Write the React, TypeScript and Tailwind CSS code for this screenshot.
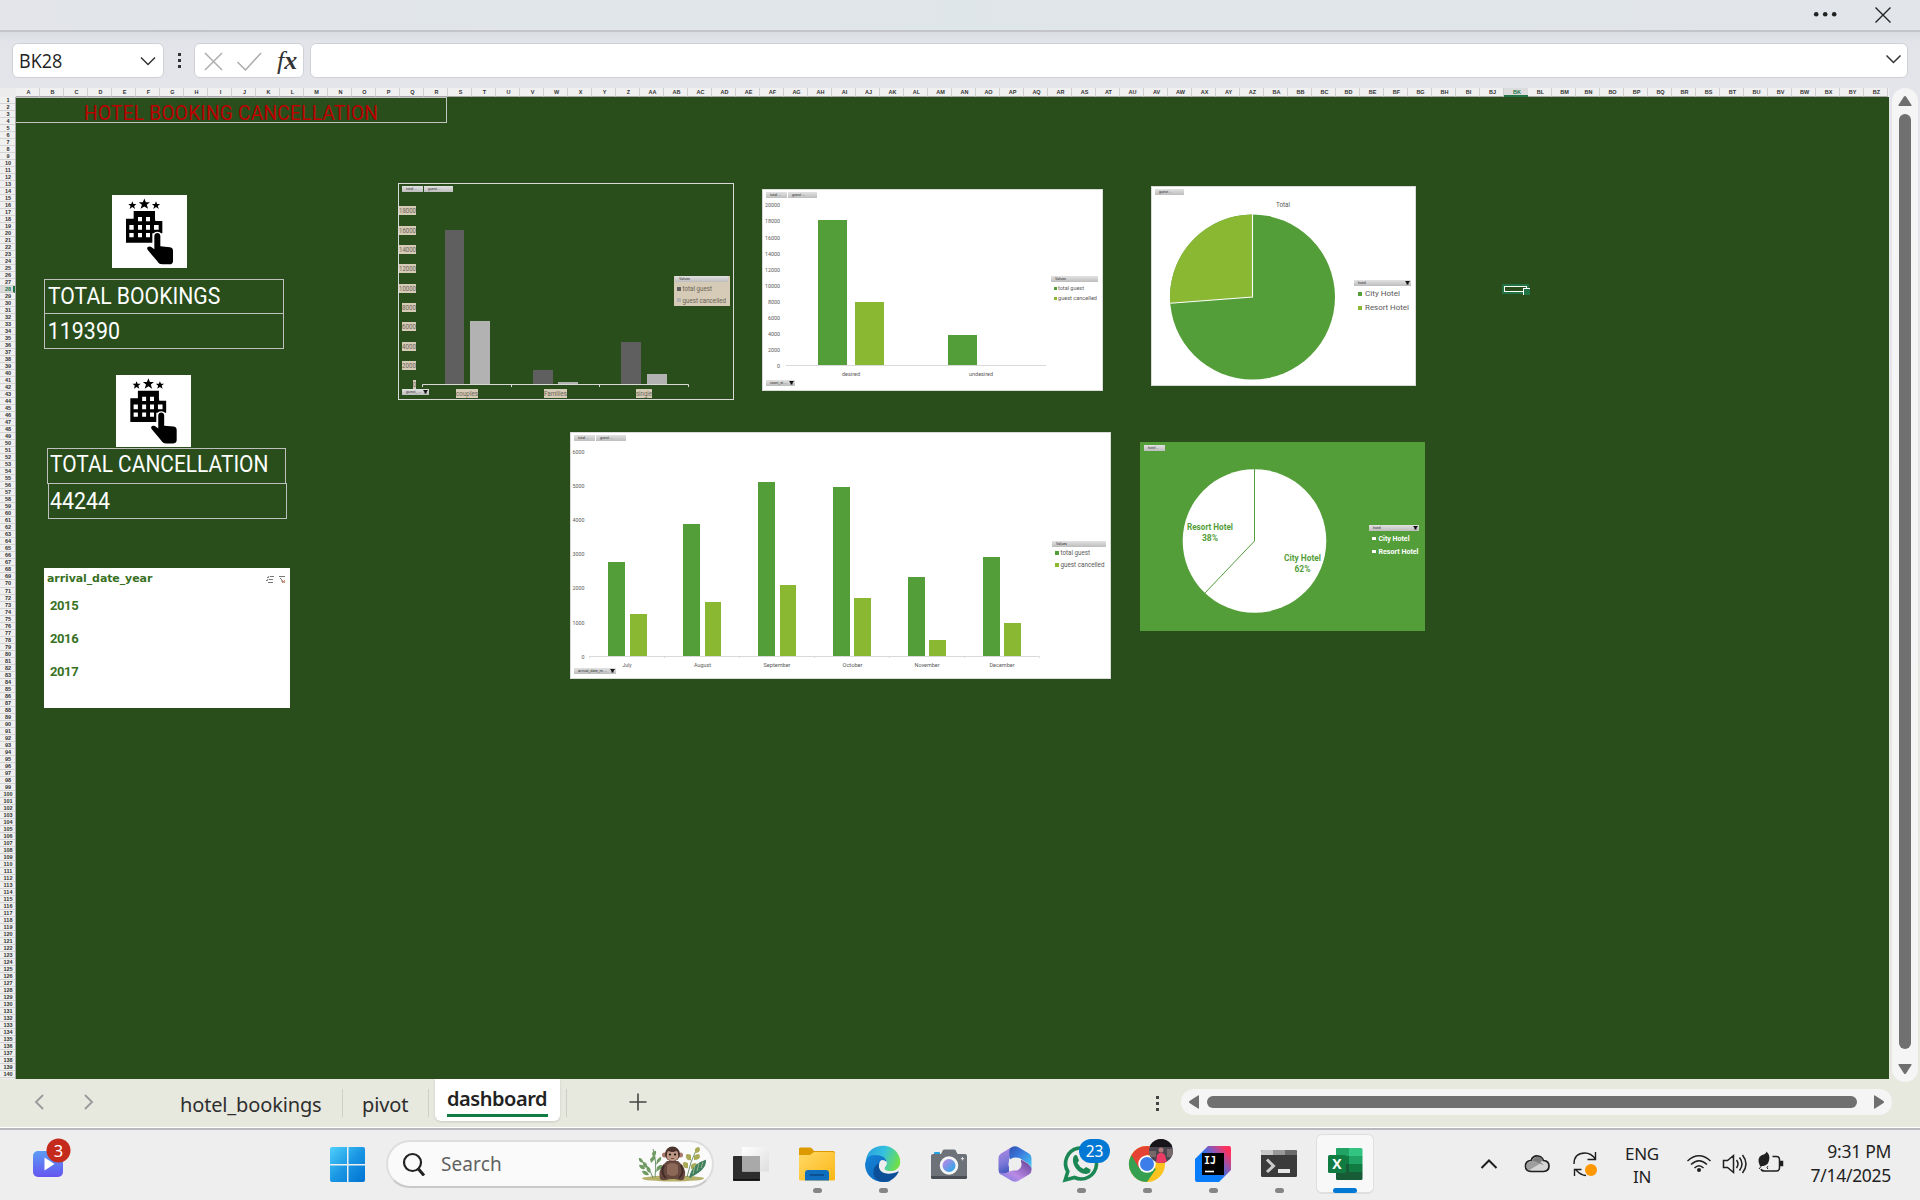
import React from "react";

const GREEN = "#549e39";
const LIME = "#8ab833";

function colName(i: number): string {
  return i < 26
    ? String.fromCharCode(65 + i)
    : String.fromCharCode(64 + Math.floor(i / 26)) + String.fromCharCode(65 + (i % 26));
}
const COLS = Array.from({ length: 78 }, (_, i) => colName(i));
const ROWS = Array.from({ length: 140 }, (_, i) => i + 1);

type LabelProps = {
  x: number;
  y: number;
  w: number;
  s?: number;
  c?: string;
  a?: "start" | "middle" | "end";
  b?: boolean;
  children: string;
};
function Label({ x, y, w, s = 6, c = "#595959", a = "start", b, children }: LabelProps) {
  return (
    <text
      x={x}
      y={y}
      textLength={w}
      lengthAdjust="spacingAndGlyphs"
      fontSize={s}
      fill={c}
      textAnchor={a}
      fontWeight={b ? 700 : 400}
      fontFamily="Roboto, 'Liberation Sans', sans-serif"
    >
      {children}
    </text>
  );
}

function FieldButton({ x, y, w, tw, arrow, children }: { x: number; y: number; w: number; tw: number; arrow?: boolean; children: string }) {
  return (
    <g>
      <rect x={x} y={y} width={w} height={6} fill="url(#btn)" />
      <Label x={x + 4} y={y + 4.3} w={tw} s={4.4} c="#333">{children}</Label>
      {arrow && <path d={`M${x + w - 6} ${y + 1}h5l-1.5 2v1.5h-2v-1.5z`} fill="#111" />}
    </g>
  );
}

function Chart({ x, y, w, h, children }: { x: number; y: number; w: number; h: number; children: React.ReactNode }) {
  return (
    <svg className="absolute" style={{ left: x - 16, top: y - 97 }} width={w} height={h} viewBox={`${x} ${y} ${w} ${h}`}>
      <defs>
        <linearGradient id="btn" x1="0" y1="0" x2="0" y2="1">
          <stop offset="0" stopColor="#e2e2e2" />
          <stop offset="1" stopColor="#bdbdbd" />
        </linearGradient>
      </defs>
      {children}
    </svg>
  );
}

function Bars({ data, bottom }: { data: [number, number, number, string][]; bottom: number }) {
  return (
    <>
      {data.map(([x, w, top, c]) => (
        <rect key={x} x={x} y={top} width={w} height={bottom - top} fill={c} />
      ))}
    </>
  );
}

function GuestTypeChart() {
  const ticks: [number, string][] = [
    [206, "18000"], [226, "16000"], [245, "14000"], [264, "12000"], [284, "10000"],
    [303, "8000"], [322, "6000"], [342, "4000"], [361, "2000"], [380, "0"],
  ];
  const cats: [number, number, string][] = [[456, 22, "couples"], [544, 23, "Families"], [636, 16, "single"]];
  return (
    <Chart x={398} y={183} w={336} h={217}>
      <rect x={398.5} y={183.5} width={335} height={216} fill="none" stroke="#d9d9d9" />
      <FieldButton x={402} y={186} w={21} tw={11}>total ...</FieldButton>
      <FieldButton x={424} y={186} w={29} tw={13}>guest ...</FieldButton>
      {ticks.map(([y, t]) => {
        const w = t.length === 5 ? 17 : t.length === 4 ? 14 : 3;
        return (
          <g key={t}>
            <rect x={416 - w} y={y} width={w} height={9} fill="#d5cbb6" />
            <Label x={416} y={y + 6.8} w={w} s={6.6} c="#6b6457" a="end">{t}</Label>
          </g>
        );
      })}
      <Bars
        bottom={384}
        data={[
          [445, 19, 230, "#5f5f5f"], [470, 20, 321, "#b2b2b2"], [533, 20, 370, "#5f5f5f"],
          [558, 20, 382, "#b2b2b2"], [621, 20, 342, "#5f5f5f"], [647, 20, 374, "#b2b2b2"],
        ]}
      />
      <path d="M422.5 387v-2.5h266v2.5M511.5 384.500v2.500M599.500 384.500v2.500" fill="none" stroke="#d9d9d9" />
      <FieldButton x={402} y={389} w={27} tw={15} arrow>guest_ ...</FieldButton>
      {cats.map(([x, w, t]) => (
        <g key={t}>
          <rect x={x} y={389} width={w} height={9} fill="#d5cbb6" />
          <Label x={x} y={395.8} w={w} s={6.8} c="#6b6457">{t}</Label>
        </g>
      ))}
      <rect x={674} y={276} width={56} height={30} fill="#d5cbb6" />
      <FieldButton x={675} y={276} w={53} tw={11}>Values</FieldButton>
      <rect x={677} y={287} width={4} height={4} fill="#5f5f5f" />
      <rect x={677} y={298} width={4} height={4} fill="#b2b2b2" />
      <Label x={682.500} y={291} w={29.500} s={7} c="#6b6457">total guest</Label>
      <Label x={682.500} y={303} w={43.500} s={7} c="#6b6457">guest cancelled</Label>
    </Chart>
  );
}

function RoomStatusChart() {
  const ys = [205, 221, 238, 254, 270, 286, 302, 318, 334, 350, 366];
  return (
    <Chart x={762} y={189} w={341} h={202}>
      <rect x={762.5} y={189.5} width={340} height={201} fill="#fff" stroke="#d9d9d9" />
      <FieldButton x={766} y={192} w={21} tw={11}>total ...</FieldButton>
      <FieldButton x={788} y={192} w={29} tw={13}>guest ...</FieldButton>
      {ys.map((y, i) => {
        const t = String(20000 - i * 2000);
        return <Label key={t} x={780} y={y + 2} w={t.length * 3} s={5.6} a="end">{t}</Label>;
      })}
      <Bars bottom={365} data={[[818, 29, 220, GREEN], [855, 29, 302, LIME], [948, 29, 335, GREEN]]} />
      <path d="M786 365.500h260" stroke="#d9d9d9" />
      <Label x={851} y={376} w={18} s={5.6} a="middle">desired</Label>
      <Label x={981} y={376} w={24} s={5.6} a="middle">undesired</Label>
      <FieldButton x={766} y={380} w={29} tw={17} arrow>room_st ...</FieldButton>
      <FieldButton x={1051} y={276} w={47} tw={11}>Values</FieldButton>
      <rect x={1054} y={287} width={3} height={3} fill={GREEN} />
      <rect x={1054} y={297} width={3} height={3} fill={LIME} />
      <Label x={1058} y={290.300} w={26} s={6}>total guest</Label>
      <Label x={1058} y={300.300} w={39} s={6}>guest cancelled</Label>
    </Chart>
  );
}

function HotelShareChart() {
  return (
    <Chart x={1151} y={186} w={265} h={200}>
      <rect x={1151.5} y={186.5} width={264} height={199} fill="#fff" stroke="#d9d9d9" />
      <FieldButton x={1155} y={189} w={29} tw={13}>guest ...</FieldButton>
      <Label x={1283} y={207} w={14} s={6.600} a="middle">Total</Label>
      <circle cx={1252.500} cy={297} r={82.500} fill={GREEN} />
      <path d="M1252.500 297V214.500A82.500 82.500 0 0 0 1170.200 303.200Z" fill={LIME} />
      <path d="M1252.500 214V297L1170.200 303.300" fill="none" stroke="#fff" strokeWidth={1.100} />
      <FieldButton x={1354} y={280} w={57} tw={8} arrow>hotel</FieldButton>
      <rect x={1358} y={292} width={4} height={4} fill={GREEN} />
      <rect x={1358} y={306} width={4} height={4} fill={LIME} />
      <Label x={1365} y={296.300} w={35} s={8}>City Hotel</Label>
      <Label x={1365} y={310.300} w={44} s={8}>Resort Hotel</Label>
    </Chart>
  );
}

function MonthlyChart() {
  const ys = [452, 486, 520, 554, 588, 623, 657];
  const months: [number, number, string][] = [
    [627, 9, "July"], [702.5, 17, "August"], [777, 27, "September"],
    [852.5, 20, "October"], [927, 25, "November"], [1002, 25, "December"],
  ];
  return (
    <Chart x={570} y={432} w={541} h={247}>
      <rect x={570.5} y={432.5} width={540} height={246} fill="#fff" stroke="#d9d9d9" />
      <FieldButton x={574} y={435} w={21} tw={11}>total ...</FieldButton>
      <FieldButton x={596} y={435} w={30} tw={13}>guest ...</FieldButton>
      {ys.map((y, i) => {
        const t = String(6000 - i * 1000);
        return <Label key={t} x={584.500} y={y + 2} w={t.length * 3} s={5.800} a="end">{t}</Label>;
      })}
      <Bars
        bottom={656}
        data={[
          [608, 17, 562, GREEN], [630, 17, 614, LIME], [683, 17, 524, GREEN], [705, 16, 602, LIME],
          [758, 17, 482, GREEN], [780, 16, 585, LIME], [833, 17, 487, GREEN], [854, 17, 598, LIME],
          [908, 17, 577, GREEN], [929, 17, 640, LIME], [983, 17, 557, GREEN], [1004, 17, 623, LIME],
        ]}
      />
      <path d="M589.500 658v-1.500h450v1.500M664.500 656v2M739.500 656v2M814.500 656v2M889.500 656v2M964.500 656v2" fill="none" stroke="#d9d9d9" />
      {months.map(([x, w, t]) => (
        <Label key={t} x={x} y={667} w={w} s={5.800} a="middle">{t}</Label>
      ))}
      <FieldButton x={574} y={668} w={42} tw={29} arrow>arrival_date_m ...</FieldButton>
      <FieldButton x={1052} y={541} w={54} tw={11}>Values</FieldButton>
      <rect x={1055} y={551} width={4} height={4} fill={GREEN} />
      <rect x={1055} y={563} width={4} height={4} fill={LIME} />
      <Label x={1060.500} y={555} w={29.500} s={6.800}>total guest</Label>
      <Label x={1060.500} y={567} w={44} s={6.800}>guest cancelled</Label>
    </Chart>
  );
}

function CancellationShareChart() {
  return (
    <Chart x={1140} y={442} w={285} h={189}>
      <rect x={1140} y={442} width={285} height={189} fill={GREEN} />
      <FieldButton x={1144} y={445} w={21} tw={11}>hotel ...</FieldButton>
      <circle cx={1254.500} cy={541} r={71.800} fill="#fff" />
      <path d="M1254.500 469V541L1204.500 593.500" fill="none" stroke={GREEN} />
      <Label x={1210} y={530} w={46} s={8.200} c={GREEN} a="middle" b>Resort Hotel</Label>
      <Label x={1210} y={541} w={16} s={8.200} c={GREEN} a="middle" b>38%</Label>
      <Label x={1302.500} y={561} w={37} s={8.200} c={GREEN} a="middle" b>City Hotel</Label>
      <Label x={1302.500} y={572} w={16} s={8.200} c={GREEN} a="middle" b>62%</Label>
      <FieldButton x={1369} y={525} w={50} tw={8} arrow>hotel</FieldButton>
      <rect x={1372} y={537} width={4} height={3} fill="#fff" />
      <rect x={1372} y={550} width={4} height={3} fill="#fff" />
      <Label x={1378.500} y={541} w={31} s={7} c="#fff" b>City Hotel</Label>
      <Label x={1378.500} y={554} w={40} s={7} c="#fff" b>Resort Hotel</Label>
    </Chart>
  );
}

function BookingIcon() {
  const star = "M0-15L4-5 15-5 6.500 2 10 13 0 6.500-10 13-6.500 2-15-5-4-5Z";
  return (
    <svg viewBox="0 0 225 219" className="size-full">
      <path d={star} transform="translate(61 31) scale(.82)" />
      <path d={star} transform="translate(97 27) scale(1.12)" />
      <path d={star} transform="translate(132 31) scale(.82)" />
      <path d="M42 71h23V48h64v23l1 7h21v37h-30v28H42Z" />
      <path
        fill="#fff"
        d="M78 66h12v13H78zM102 66h12v13h-12zM52 90h13v14H52zM78 90h12v14H78zM102 90h12v14h-12zM126 90h14v14h-14zM52 114h13v13H52zM78 114h12v13H78zM102 114h12v13h-12z"
      />
      <path
        d="M127 123c0-12 18-12 18 0v31l29 3c7 1 9 5 9 11v30c0 7-4 10-10 10h-22c-8 0-12-4-15-9l-28-33c-8-10 5-15 11-9l8 6Z"
        stroke="#fff"
        strokeWidth="7"
        paintOrder="stroke"
      />
    </svg>
  );
}

function Sheet() {
  return (
    <div className="flex h-[991px] w-[1889px] shrink-0 flex-col overflow-hidden">
      <div className="flex h-[9px] shrink-0 bg-[#f0f0f0] font-['Liberation_Sans',sans-serif] text-[5.5px] font-bold leading-[9px] text-[#333]">
        <div className="w-4 shrink-0 bg-[#ececec]" />
        {COLS.map((c) => (
          <div
            key={c}
            className={
              c === "BK"
                ? "w-6 shrink-0 border-b-2 border-[#217346] bg-[#dcdcdc] pl-[2px] text-center text-[#217346]"
                : "w-6 shrink-0 border-r border-b border-r-[#cfcfcf] border-b-[#a8a8a8] pl-[2px] text-center"
            }
          >
            {c}
          </div>
        ))}
      </div>
      <div className="flex grow">
        <div className="w-4 shrink-0 border-r border-[#a8a8a8] bg-[#f0f0f0] font-['Liberation_Sans',sans-serif] text-[5.5px] font-bold leading-[6px] text-[#333]">
          {ROWS.map((r) => (
            <div
              key={r}
              className={
                r === 28
                  ? "h-[7px] border-r-2 border-b border-r-[#217346] border-b-[#cfcfcf] bg-[#dcdcdc] pl-[3px] text-center text-[#217346]"
                  : r === 70
                    ? "h-2 border-b border-[#d4d4d4] pl-px text-center"
                    : "h-[7px] border-b border-[#d4d4d4] pl-px text-center"
              }
            >
              {r}
            </div>
          ))}
        </div>
        <div className="relative grow bg-[#294e1c] font-[Roboto,'Liberation_Sans',sans-serif]">
          <div className="absolute left-0 top-0 h-[26px] w-[431px] border border-l-0 border-[#c4c4c4] pl-[68px]">
            <span className="block origin-left scale-x-[0.937] whitespace-nowrap text-[20.5px] leading-[30px] tracking-[0.2px] text-[#bb0000]">HOTEL BOOKING CANCELLATION</span>
          </div>

          <div className="absolute left-[96px] top-[98px] h-[73px] w-[75px] bg-white"><BookingIcon /></div>
          <div className="absolute left-[28px] top-[182px] h-[70px] w-[240px] border border-[#bfbfbf] text-[23px] text-white">
            <div className="h-[34px] border-b border-[#bfbfbf] pl-[3px] leading-[34px]">
              <span className="block origin-left scale-x-[0.92]">TOTAL BOOKINGS</span>
            </div>
            <div className="origin-left scale-x-[0.93] pl-[3px] leading-[35px]">119390</div>
          </div>

          <div className="absolute left-[100px] top-[278px] h-[72px] w-[75px] bg-white"><BookingIcon /></div>
          <div className="absolute left-[31px] top-[351px] h-9 w-[239px] whitespace-nowrap border border-[#bfbfbf] pl-[2px] text-[23px] leading-[31px] text-white">
            <span className="block origin-left scale-x-[0.91]">TOTAL CANCELLATION</span>
          </div>
          <div className="absolute left-[32px] top-[386px] h-9 w-[239px] border border-[#bfbfbf] pl-[1px] text-[23px] leading-[35px] text-white">
            <span className="block origin-left scale-x-[0.93]">44244</span>
          </div>

          <div className="absolute left-[28px] top-[471px] h-[140px] w-[246px] bg-white pl-[3px] pr-1 text-[#38711f]">
            <div className="flex h-[22px] items-center justify-between font-['DejaVu_Sans',sans-serif] text-[11px] font-bold tracking-[-0.1px]">
              <span className="pt-px">arrival_date_year</span>
              <svg width="20" height="8" viewBox="0 0 20 8" fill="none" stroke="#777">
                <path d="M1 2l1 1 1-2M4 1.500h4M0 5l1 1 1-2M3 4.500h4M2 7.500h5M13 1.500h6M14 3l2 2v2h3" />
                <path d="M16 5l3 3m0-3l-3 3" stroke="#d8764f" strokeWidth=".8" />
              </svg>
            </div>
            <div className="-mt-px flex flex-col pl-[3px] text-[13px] font-bold leading-[33px] tracking-[-0.4px]">
              <span>2015</span>
              <span>2016</span>
              <span>2017</span>
            </div>
          </div>

          <GuestTypeChart />
          <RoomStatusChart />
          <HotelShareChart />
          <MonthlyChart />
          <CancellationShareChart />

          <div className="absolute left-[1486px] top-[187px] h-[10px] w-[27px] border-2 border-[#217346]">
            <div className="h-full border border-white" />
            <div className="absolute left-[19px] top-[2px] size-[7px] border-l border-t border-white bg-[#217346]" />
          </div>
        </div>
      </div>
    </div>
  );
}

function TopBars() {
  return (
    <>
      <div className="flex h-[32px] shrink-0 items-start justify-end border-b-2 border-[#c3c5c8] bg-gradient-to-r from-[#e3e5ea] via-[#dfe6e9] to-[#e2e5ea]">
        <svg width="110" height="30" viewBox="1810 0 110 30">
          <g fill="#222">
            <circle cx="1816.200" cy="14.300" r="2.300" />
            <circle cx="1825.200" cy="14.300" r="2.300" />
            <circle cx="1834.200" cy="14.300" r="2.300" />
          </g>
          <path d="M1875.500 7.500l15 15m0-15l-15 15" stroke="#222" strokeWidth="1.400" />
        </svg>
      </div>
      <div className="flex h-14 shrink-0 items-start bg-gradient-to-b from-[#dadde1] via-[#e2e4e9] via-15% to-[#e3e5ea] pl-3 pt-[11px]">
        <div className="flex h-[35px] w-[152px] items-center justify-between rounded-md border border-[#cfd1d5] bg-white pl-[6px] pr-[7px] font-['Open_Sans',sans-serif] text-[20px] text-[#222]">
          <span className="origin-left scale-x-[0.9]">BK28</span>
          <svg width="16" height="10" viewBox="0 0 16 10" fill="none" stroke="#333" strokeWidth="1.500"><path d="M1 1.500l7 7 7-7" /></svg>
        </div>
        <div className="flex h-[35px] w-[30px] flex-col items-center justify-center gap-[3px]">
          <i className="size-[3px] bg-[#333]" /><i className="size-[3px] bg-[#333]" /><i className="size-[3px] bg-[#333]" />
        </div>
        <div className="flex h-[35px] w-[110px] items-center rounded-md border border-[#cfd1d5] bg-white pl-[9px]">
          <svg width="58" height="20" viewBox="0 0 58 20" fill="none" stroke="#acacac" strokeWidth="1.500"><path d="M1 2l17 17m0-17L1 19M33.500 11l8 8L57 2" /></svg>
          <span className="ml-[15px] font-['Liberation_Serif',serif] text-[26px] font-bold italic leading-[30px] text-[#333]"><span className="font-normal">f</span>x</span>
        </div>
        <div className="ml-[6px] flex h-[35px] w-[1598px] items-center justify-end rounded-md border border-[#cfd1d5] bg-white pr-[6px]">
          <svg width="15" height="14" viewBox="0 0 15 14" fill="none" stroke="#333" strokeWidth="1.500"><path d="M.5 1.500l7 7 7-7" /></svg>
        </div>
      </div>
    </>
  );
}

function SheetTabs() {
  return (
    <div className="flex h-[49px] shrink-0 items-start border-b border-white bg-[#e7e8de] font-['Noto_Sans',sans-serif] text-[20px] text-[#2e2e2e]">
      <svg width="180" height="48" viewBox="0 1079 180 48" fill="none" stroke="#999" strokeWidth="1.800"><path d="M43 1095l-7 7 7 7M85 1095l7 7-7 7" /></svg>
      <div className="mt-[10px] flex h-7 w-[163px] items-center border-r border-[#cfcfc8] pt-[4px] tracking-[-0.15px]">hotel_bookings</div>
      <div className="mt-[10px] flex h-7 w-[86px] items-center border-r border-[#cfcfc8] pl-[19px] pt-[4px] tracking-[-0.1px]">pivot</div>
      <div className="ml-[6px] flex h-[42px] w-[125px] justify-center rounded-b-md bg-white shadow-sm">
        <div className="h-[38px] w-[101px] whitespace-nowrap border-b-[3px] border-[#107c41] font-semibold leading-[40px] tracking-[-0.45px] text-[#222]">dashboard</div>
      </div>
      <div className="ml-[6px] mt-[10px] h-7 w-px bg-[#cfcfc8]" />
      <svg className="ml-[62px] mt-[14px]" width="18" height="18" viewBox="0 0 18 18" stroke="#444" strokeWidth="1.600"><path d="M9 .5v17M.5 9h17" /></svg>
      <div className="ml-[508px] mt-[17px] flex w-[5px] flex-col items-center gap-[3px]">
        <i className="size-[3px] bg-[#444]" /><i className="size-[3px] bg-[#444]" /><i className="size-[3px] bg-[#444]" />
      </div>
      <div className="ml-[21px] mt-[10px] flex h-[26px] w-[711px] items-center rounded-full bg-[#f5f5f5] px-2">
        <svg width="10" height="14" viewBox="0 0 10 14" fill="#6f6f6f"><path d="M10 1v12q0 1-1 .5L.5 8q-1-1 0-2L9 .5q1-.5 1 .5" /></svg>
        <div className="ml-2 h-3 w-[650px] rounded-full bg-[#707070]" />
        <svg className="ml-auto" width="10" height="14" viewBox="0 0 10 14" fill="#6f6f6f"><path d="M0 1v12q0 1 1 .5L9.500 8q1-1 0-2L1 .5Q0 0 0 1" /></svg>
      </div>
    </div>
  );
}

function Monkey() {
  return (
    <svg width="70" height="36" viewBox="0 0 70 36">
      <ellipse cx="36" cy="32.500" rx="31" ry="3" fill="#b5b06a" />
      <g fill="none" strokeWidth=".8" stroke="#4d7a4c">
        <path d="M16 32Q12 20 2 12M18 31Q20 15 16 3M50 31Q53 16 60 2M53 32Q57 20 69 14" />
      </g>
      <g fill="#6f9a62">
        <path d="M2 12q4 0 4 5-5-1-4-5M6 16q5 0 4 6-5-1-4-6M2 19q5-1 6 4-5 1-6-4M10 20q5 2 3 7-5-2-3-7M5 25q5-1 7 4-6 1-7-4M15 7q5-5 4 1l-3 4M13 13q6-6 5 0l-4 4M20 14q5-6 4 0l-5 5M20 21q6-5 5 1l-6 4" />
        <path d="M58 3q4-4 5 0 0 4-5 4zM54 9q-6-3-5 2 1 4 5 3zM57 10q5-4 6 0 0 4-6 4zM51 17q-6-3-5 2 1 4 5 3zM54 19q5-4 6 0 0 4-6 4z" fill="#a9a956" />
        <path d="M52 32Q55 17 69 14q1 10-17 18" fill="#3f7f62" />
        <path d="M56 28l2-9M60 25l2-8M64 22l2-6" stroke="#b9c58a" strokeWidth=".8" />
      </g>
      <path d="M23 33q-2-8 3-14l4-4h11l4 4q5 6 2 14-2 2-5 1l-4-1h-5l-4 1q-4 1-6-1z" fill="#66483e" />
      <path d="M30 19q5-4 11 0v9q-5 4-11 0z" fill="#8b6858" />
      <circle cx="27.500" cy="9" r="2.500" fill="#a6796a" /><circle cx="43.500" cy="9" r="2.500" fill="#a6796a" />
      <ellipse cx="35.500" cy="8" rx="7.500" ry="7.500" fill="#4b332d" />
      <path d="M30 8q0-4 3-2.500 2.500 1 5 0Q41 4 41 8q1.500 7-5.500 7T30 8" fill="#bd9583" />
      <circle cx="33" cy="8.500" r="1" /><circle cx="38" cy="8.500" r="1" />
      <path d="M34 12.500h3" stroke="#543" strokeWidth=".8" />
      <path d="M27 19q-4 8 2 13M44 19q4 8-2 13" stroke="#412d28" strokeWidth="2" fill="none" />
    </svg>
  );
}

function AppSlot({ running, active, children }: { running?: boolean; active?: boolean; children: React.ReactNode }) {
  return (
    <div className="flex h-[70px] w-[66px] shrink-0 justify-center pt-1">
      <div className={active ? "flex h-[60px] w-[58px] flex-col items-center rounded-md border border-b-2 border-[#dfdfdf] bg-[#f8f8f8]" : "flex h-[60px] w-[58px] flex-col items-center border border-transparent border-b-2"}>
        <div className="mt-[11px] h-9 w-9">{children}</div>
        {running && <div className={active ? "mt-[6px] h-[5px] w-6 shrink-0 rounded-full bg-[#0078d4]" : "mt-[6px] h-[5px] w-[9px] shrink-0 rounded-full bg-[#858585]"} />}
      </div>
    </div>
  );
}

const svgProps = { width: 36, height: 36, viewBox: "0 0 36 36", className: "overflow-visible" };

function Taskbar() {
  return (
    <div className="flex h-[72px] shrink-0 border-t-2 border-[#b9b9bd] bg-[#eeeeee] font-['Noto_Sans',sans-serif] text-[#1f1f1f]">
      <div className="w-[330px] shrink-0 pl-[33px] pt-2">
        <svg width="40" height="42" viewBox="33 1138 40 42">
          <defs>
            <linearGradient id="vid" x1="0" y1="0" x2="0" y2="1"><stop stopColor="#5c9cf5" /><stop offset="1" stopColor="#6554f0" /></linearGradient>
          </defs>
          <rect x="33" y="1151" width="30" height="26" rx="5" fill="url(#vid)" />
          <path d="M44.500 1157.500v13l10-6.500z" fill="#fff" />
          <circle cx="58.500" cy="1150.500" r="12" fill="#c42b1c" />
          <text x="58.500" y="1156.500" fontSize="16.500" fill="#fff" textAnchor="middle" fontFamily="'Noto Sans', sans-serif">3</text>
        </svg>
      </div>
      <svg className="mt-[17px] shrink-0" width="36" height="36" viewBox="0 0 36 36">
        <defs>
          <linearGradient id="win" x1="0" y1="0" x2="1" y2="1"><stop stopColor="#4fd0fb" /><stop offset=".5" stopColor="#1a97e4" /><stop offset="1" stopColor="#0072d2" /></linearGradient>
        </defs>
        <path d="M0 2q0-2 2-2h15v17H0zM18.500 0H33q2 0 2 2v15H18.500zM0 18.500h17V35H2q-2 0-2-2zM18.500 18.500H35V33q0 2-2 2H18.500z" fill="url(#win)" />
      </svg>
      <div className="ml-5 mt-[10px] flex h-[48px] w-[328px] shrink-0 items-center rounded-full border-2 border-b-[#c9c9c9] border-[#dedede] bg-[#fafafa] pl-[14px] pr-[5px]">
        <svg width="24" height="24" viewBox="0 0 24 24" fill="none" stroke="#222" strokeWidth="2.200"><circle cx="10.500" cy="10.500" r="8.500" /><path d="M16 16.500l6 7" strokeWidth="3" /></svg>
        <span className="ml-[15px] pt-px text-[19px] tracking-[0.1px] text-[#616161]">Search</span>
        <div className="ml-auto"><Monkey /></div>
      </div>
      <div className="ml-1 flex shrink-0">
        <AppSlot>
          <svg {...svgProps}>
            <defs><linearGradient id="tv" x1="0" y1="0" x2="1" y2="1"><stop stopColor="#fff" /><stop offset="1" stopColor="#dedede" /></linearGradient></defs>
            <rect y="10" width="27" height="25" rx="1" fill="#2d2d2d" /><rect y="33" width="27" height="1.500" fill="#111" />
            <rect x="9" y="1" width="27" height="24.500" rx="1" fill="url(#tv)" /><path d="M9 10h18v15.500H9z" fill="#a9a9a9" />
          </svg>
        </AppSlot>
        <AppSlot running>
          <svg {...svgProps}>
            <defs><linearGradient id="fo" x1="0" y1="0" x2="1" y2="1"><stop stopColor="#ffd968" /><stop offset="1" stopColor="#fdb714" /></linearGradient></defs>
            <path d="M0 3q0-1.500 1.500-1.500H11q1 0 2 1L15 5h19q2 0 2 1.500V12H0z" fill="#dd9a00" />
            <path d="M0 9h11l4-3h19q2 0 2 1.500V33q0 1.500-1.500 1.500h-33Q0 34.500 0 33z" fill="url(#fo)" />
            <path d="M6 34.500V27q0-3 3-3h18q3 0 3 3v7.500z" fill="#0f6ebd" /><path d="M10.500 29h14.500" stroke="#0a4a86" strokeWidth="1.600" />
          </svg>
        </AppSlot>
        <AppSlot running>
          <svg {...svgProps}>
            <defs>
              <linearGradient id="e1" x1="0" y1=".2" x2="1" y2=".5"><stop stopColor="#2a9fdc" /><stop offset=".5" stopColor="#35c1e0" /><stop offset="1" stopColor="#6fe048" /></linearGradient>
              <linearGradient id="e2" x1="0" y1="0" x2="1" y2="1"><stop stopColor="#1686d9" /><stop offset="1" stopColor="#0a60b5" /></linearGradient>
            </defs>
            <path d="M1 14C3-2 25-5 33 8c5 9 1 17-7 17-6 0-8-2-5-5 3-6-2-10-8-8z" fill="url(#e1)" />
            <path d="M0 18Q1 9 10 9q10 0 12 7-7-5-8 3-1 10 12 16C12 39 0 31 0 18" fill="url(#e2)" />
            <path d="M14 17c-2 10 8 13 18 9 2-1 2 0 1 1-5 9-15 11-21 7-5-4-5-13 2-17" fill="#0c4f99" />
          </svg>
        </AppSlot>
        <AppSlot>
          <svg {...svgProps}>
            <defs><linearGradient id="cam" x1="0" y1="0" x2="1" y2="1"><stop offset=".2" stopColor="#a98be8" /><stop offset=".8" stopColor="#3ba5e8" /></linearGradient></defs>
            <path d="M3 9V7q0-1 1-1h4q1 0 1 1v2z" fill="#22a2e6" />
            <path d="M0 10q0-2 2-2h8l2-4q.5-.5 1-.5h10q1 0 1.500.5l2 4H34q2 0 2 2v21H0z" fill="#6c7278" /><path d="M0 30h36v1.500q0 1.500-1.500 1.500h-33Q0 33 0 31.500z" fill="#494e54" />
            <circle cx="18" cy="19.500" r="9.300" fill="#f5f5f5" /><circle cx="18" cy="19.500" r="6.500" fill="url(#cam)" />
            <path d="M31.500 11v3.400M29.800 12.700h3.400" stroke="#dfe3e6" />
          </svg>
        </AppSlot>
        <AppSlot>
          <svg {...svgProps}>
            <defs>
              <linearGradient id="m1" x1="0" y1="0" x2=".3" y2="1"><stop stopColor="#b48ae2" /><stop offset=".6" stopColor="#7a78d8" /><stop offset="1" stopColor="#3a52b8" /></linearGradient>
              <linearGradient id="m2" x1="0" y1="0" x2="1" y2="1"><stop stopColor="#2f50b0" /><stop offset=".4" stopColor="#3a78dc" /><stop offset="1" stopColor="#48d0f6" /></linearGradient>
              <linearGradient id="m3" x1="0" y1="1" x2="1" y2="0"><stop stopColor="#6a78e0" /><stop offset=".4" stopColor="#b98be5" /><stop offset="1" stopColor="#5d3a8f" /></linearGradient>
            </defs>
            <path d="M14 1.500L4 7.500q-2.500 1.500-2.500 4.500v12q0 3 2.500 4.500 4 1.500 8-1V14q0-2 2-3.500L21 5z" fill="url(#m1)" />
            <path d="M13 2.500l2-1.500q3-1.500 6 0l11 6.500q2.500 1.500 2.500 4.500v11q-.5-4-4-6l-6.500-4q-3-2-6-.5l-4.500 2.500q-2-8-.5-12.500" fill="url(#m2)" />
            <path d="M34.500 17v7q0 3-2.500 4.500L21 35q-3 1.500-6 0L4 28.500 2 26.500q6 2 10-1l4-1 8-4V13.500l6 3.500q3 2 4.500 5" fill="url(#m3)" />
            <circle cx="18" cy="18" r="6.600" fill="#eee" />
          </svg>
        </AppSlot>
        <AppSlot running>
          <svg {...svgProps}>
            <path d="M2.200 34l2.600-8.500A15.500 15.500 0 1 1 11.500 31.500z" fill="#eee" stroke="#1b8755" strokeWidth="3.600" />
            <path d="M11 10q2-2 3.500.5l1.500 4-1.500 2.500q2 4 6 6l2.500-2 4.500 2.500q.5 4-4.500 4.500C15 28 7 17 11 10" fill="#1b8755" />
            <rect x="16" y="-7" width="31" height="24" rx="12" fill="#0078d4" />
            <text x="31.500" y="10.500" fontSize="15.500" fill="#fff" textAnchor="middle" fontFamily="'Noto Sans', sans-serif">23</text>
          </svg>
        </AppSlot>
        <AppSlot running>
          <svg {...svgProps}>
            <circle cx="18" cy="18" r="18" fill="#fcc31e" />
            <path d="M18 18L2.400 9A18 18 0 0 0 18 36l9-13z" fill="#35a150" />
            <path d="M2.400 9L10 22l8-13 15.600 0A18 18 0 0 0 2.400 9" fill="#e44334" />
            <circle cx="18" cy="18" r="8.700" fill="#fff" /><circle cx="18" cy="18" r="7" fill="#3d7de9" />
            <clipPath id="av"><circle cx="32" cy="5" r="12" /></clipPath>
            <g clipPath="url(#av)">
              <path d="M20-7h24v24H20z" fill="#4b4550" /><path d="M20-7h24v8H20z" fill="#17151a" />
              <path d="M20 5h7v6h-7zM38 3h6v8h-6z" fill="#77686a" /><circle cx="32" cy="4" r="2.500" fill="#b07a78" />
              <path d="M28 9q4-5 8 0l2 8H27z" fill="#ec3b64" />
            </g>
          </svg>
        </AppSlot>
        <AppSlot running>
          <svg {...svgProps}>
            <defs><linearGradient id="ij" x1=".3" y1=".4" x2=".8" y2="0"><stop stopColor="#087cfa" /><stop offset=".5" stopColor="#8a58b8" /><stop offset="1" stopColor="#fe315d" /></linearGradient></defs>
            <path d="M13 0h21q2 0 2 2v22L24 36H2q-2 0-2-2V13z" fill="url(#ij)" />
            <rect x="7" y="7" width="22" height="22" />
            <text x="9" y="18" fontSize="10.500" fontWeight="700" fill="#fff" fontFamily="'DejaVu Sans Mono', monospace" textLength="12" lengthAdjust="spacingAndGlyphs">IJ</text>
            <path d="M10 25.500h9" stroke="#fff" strokeWidth="1.600" />
          </svg>
        </AppSlot>
        <AppSlot running>
          <svg {...svgProps}>
            <rect y="4" width="36" height="27" rx="1.500" fill="#3b3b3b" />
            <path d="M0 9V5.500Q0 4 1.500 4H12v5z" fill="#c9c9c9" /><path d="M12 4h12v5H12z" fill="#999" /><path d="M24 4h10.500Q36 4 36 5.500V9H24z" fill="#6b6b6b" />
            <path d="M6 13.500l6.500 6.500L6 26" fill="none" stroke="#ccc" strokeWidth="3" /><path d="M17 25h12" stroke="#e5e5e5" strokeWidth="4" />
          </svg>
        </AppSlot>
        <AppSlot running active>
          <svg {...svgProps}>
            <path d="M9 3q0-1 1-1h12v8H9z" fill="#21a366" /><path d="M22 2h12q1.500 0 1.500 1.500V10H22z" fill="#33c481" />
            <path d="M9 10h13v8H9z" fill="#107c41" /><path d="M22 10h13.500v8H22z" fill="#21a366" />
            <path d="M9 18h13v8H9z" fill="#185c37" /><path d="M22 18h13.500v8H22z" fill="#107c41" />
            <path d="M9 26h26.500v6.500q0 1.500-1.500 1.500H10q-1 0-1-1.500z" fill="#185c37" />
            <rect x="1" y="9" width="18" height="18" rx="1.500" fill="#107c41" />
            <text x="10" y="23" fontSize="14" fontWeight="700" fill="#fff" textAnchor="middle" fontFamily="'Open Sans', sans-serif">X</text>
          </svg>
        </AppSlot>
      </div>
      <svg className="ml-auto shrink-0" width="122" height="70" viewBox="1480 1130 122 70" fill="none" stroke="#1f1f1f" strokeWidth="1.700">
        <path d="M1481.500 1168l7.500-7.500 7.500 7.500" strokeWidth="2" />
        <path d="M1531 1171.500q-5.500-.5-5.500-5.500t5.500-5.500q2-5 7-4.500 4 .5 5.500 4.500 5.500.5 5.500 5.500 0 5-5.500 5.500z" fill="#d5d5d5" />
        <path d="M1532 1161q3-5 7-4 4 1 4 4l-3 1 4 3z" fill="#7b7b7b" stroke="none" />
        <path d="M1526.500 1168q-.5-7 5-7 5-.5 8 3l-11 6.500z" fill="#9e9e9e" stroke="none" />
        <path d="M1574 1164q0-11 11-11 6 0 10.500 6M1595.500 1152v7.500h-8M1586 1175.500q-5 0-10.500-6M1574.500 1176v-6.500h7" strokeWidth="1.400" />
        <circle cx="1591" cy="1170" r="6" fill="#ff9800" stroke="none" />
      </svg>
      <div className="ml-[22px] w-[36px] shrink-0 pt-[12px] text-center text-[17px] leading-[23px] tracking-[-0.3px]">ENG<br />IN</div>
      <svg className="ml-[25px] shrink-0" width="102" height="70" viewBox="1685 1130 102 70" fill="none" stroke="#1f1f1f" strokeWidth="1.500">
        <path d="M1687.500 1161q11.500-10.500 23 0M1691 1164.500q8-7.500 16 0M1694.500 1168q4.500-4.500 9 0" />
        <circle cx="1699" cy="1170" r="2" fill="#1f1f1f" stroke="none" />
        <path d="M1723.500 1160.500h4l6-5v17l-6-5h-4zM1736.500 1160q3 4 0 8M1739.500 1157.500q5 6.500 0 13M1742.500 1155q7 9 0 18" />
        <path d="M1772.500 1156.500h4q3 0 3 3v8.500q0 3-3 3h-12q-3 0-3.500-2" />
        <path d="M1780 1161.500h2.500v4h-2.500" fill="#1f1f1f" />
        <path d="M1760 1166q-4-8 2-11 4-1 4.500-3.500 4 4 2.500 9-1 4.500-5.500 5.500z" fill="#1f1f1f" stroke="none" />
        <path d="M1759 1169l7-9M1768 1166q-2 2 0 3" stroke="#1f1f1f" strokeWidth="1" />
      </svg>
      <div className="w-[133px] shrink-0 pr-[29px] pt-[9px] text-right text-[17.500px] leading-[24px] tracking-[-0.300px]">9:31 PM<br />7/14/2025</div>
    </div>
  );
}

export default function App() {
  return (
    <div className="flex h-[1200px] w-[1920px] flex-col overflow-hidden bg-[#e7e8de]">
      <TopBars />
      <div className="flex h-[991px] shrink-0 bg-gradient-to-b from-[#e3e5ea] to-[#e7e8de]">
        <Sheet />
        <div className="z-10 ml-[3px] flex h-[994px] w-[26px] flex-col items-center rounded-full bg-[#f5f5f5] py-2">
          <svg width="14" height="10" viewBox="0 0 14 10" fill="#6f6f6f"><path d="M1 10h12q1 0 .5-1L8 .5q-1-1-2 0L.5 9Q0 10 1 10" /></svg>
          <div className="mt-2 h-[935px] w-3 rounded-full bg-[#707070]" />
          <svg className="mt-auto" width="14" height="10" viewBox="0 0 14 10" fill="#6f6f6f"><path d="M1 0h12q1 0 .5 1L8 9.500q-1 1-2 0L.5 1Q0 0 1 0" /></svg>
        </div>
      </div>
      <SheetTabs />
      <Taskbar />
    </div>
  );
}
